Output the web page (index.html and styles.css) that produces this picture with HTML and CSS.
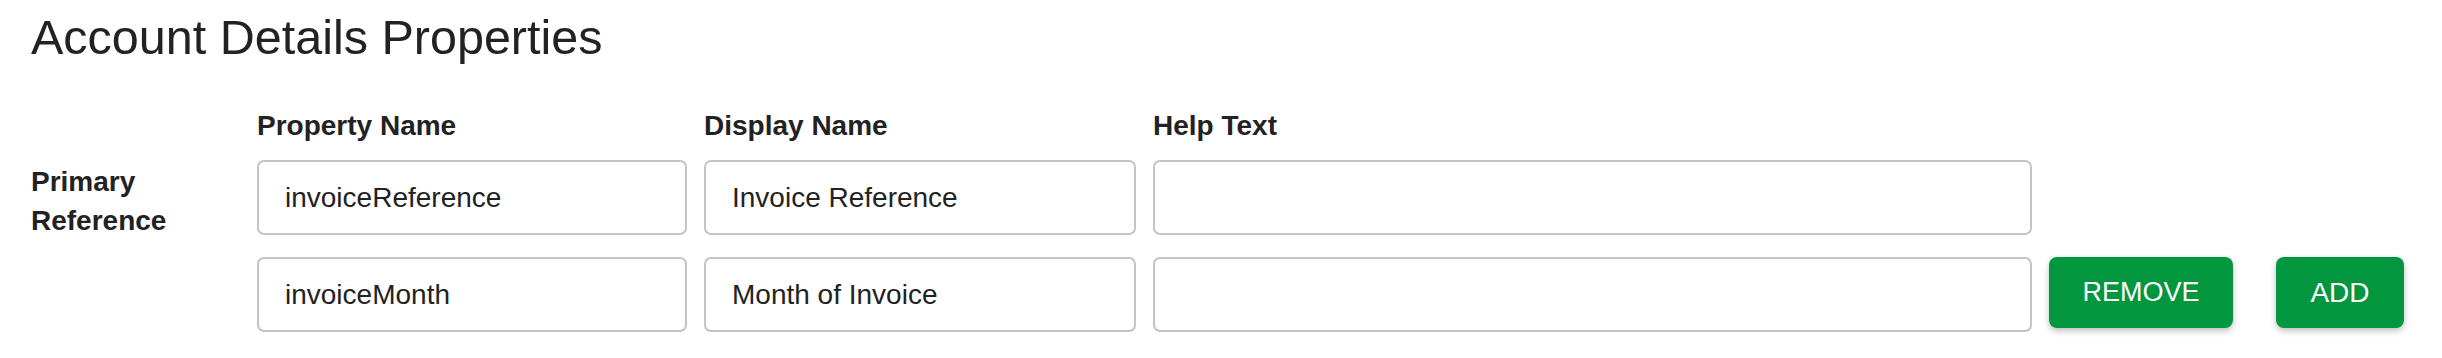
FILE: index.html
```html
<!DOCTYPE html>
<html lang="en">

<head>
    <meta charset="UTF-8" />
    <meta name="viewport" content="width=device-width, initial-scale=1.0" />
    <title>Account Details Properties</title>
    <link rel="stylesheet" href="styles.css">
</head>

<body>
    <h1 class="title">Account Details Properties</h1>

    <div class="props">
        <div class="head head-name">Property Name</div>
        <div class="head">Display Name</div>
        <div class="head">Help Text</div>

        <div class="label">Primary<br>Reference</div>
        <input class="field" type="text" value="invoiceReference">
        <input class="field" type="text" value="Invoice Reference">
        <input class="field" type="text" value="">
        <div></div>
        <div></div>

        <input class="field field-first" type="text" value="invoiceMonth">
        <input class="field" type="text" value="Month of Invoice">
        <input class="field" type="text" value="">
        <button class="btn">REMOVE</button>
        <button class="btn btn-add">ADD</button>
    </div>
</body>

</html>
```

FILE: styles.css
```css
:root{
    --text: #222222;
    --green: #02963f;
    --line: #c4c4c4;
}

*{
    margin: 0;
    padding: 0;
    box-sizing: border-box;
}
body{
    padding: 8px 31px;
    background-color: white;
    color: var(--text);
    font-family: "Liberation Sans", Arial, sans-serif;
}
.title{
    font-size: 48.5px;
    font-weight: normal;
    line-height: 1.2;
}
.props{
    display: grid;
    grid-template-columns: 209px 430px 432px 879px 184px 154px;
    column-gap: 17px;
    row-gap: 22px;
    margin-top: 41px;
    align-items: center;
}
.head{
    font-size: 28px;
    font-weight: bold;
    line-height: 32px;
    margin-top: 3px;
    margin-bottom: -4px;
}
.head-name{
    grid-column: 2;
}
.label{
    grid-column: 1;
    font-size: 28px;
    font-weight: bold;
    line-height: 39px;
    margin: -1px 0 -7px;
}
.field{
    height: 75px;
    padding: 0 26px;
    border: 2px solid var(--line);
    border-radius: 7px;
    font-family: inherit;
    font-size: 28px;
    color: var(--text);
    outline: none;
}
.field-first{
    grid-column: 2;
}
.btn{
    align-self: start;
    height: 71px;
    border: none;
    border-radius: 8px;
    background-color: var(--green);
    color: white;
    font-family: inherit;
    font-size: 27px;
    box-shadow: 0 3px 6px rgba(0, 0, 0, 0.25);
}
.btn-add{
    margin-left: 26px;
    font-size: 28px;
}
```
